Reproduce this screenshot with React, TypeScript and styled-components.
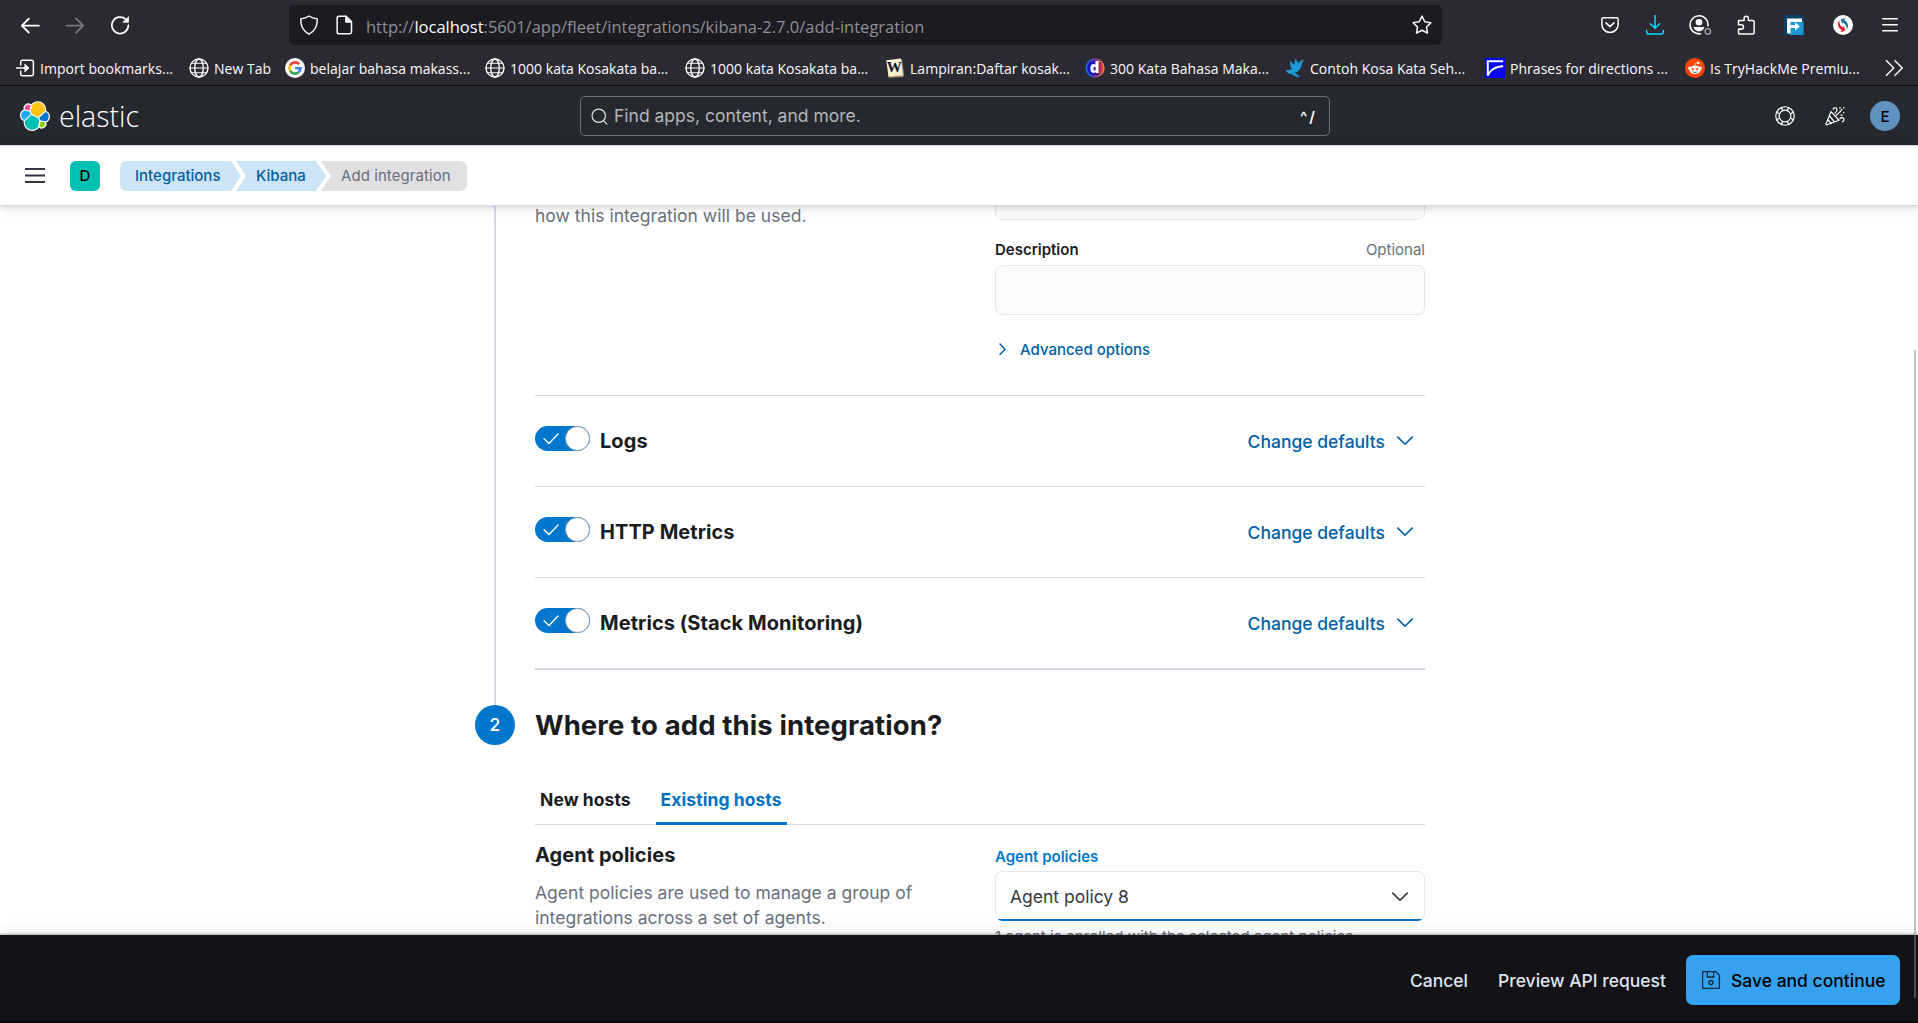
import React from "react";
import styled, { createGlobalStyle } from "styled-components";

const Global = createGlobalStyle`
  * { box-sizing: border-box; }
  html, body { margin: 0; padding: 0; background: #fff; overflow: hidden; }
  svg { display: block; flex: none; }
`;

const ui = `"Inter", "Liberation Sans", sans-serif`;
const chrome = `"Open Sans", "Noto Sans", sans-serif`;

const Page = styled.div`
  position: relative;
  display: flex;
  flex-direction: column;
  width: 1918px;
  height: 1023px;
  font-family: ${ui};
  font-size: 17.5px;
  line-height: 25px;
  color: #343741;
  overflow: hidden;
  white-space: nowrap;
`;

/* Browser chrome */
const Toolbar = styled.div`
  display: flex;
  align-items: center;
  flex: none;
  height: 50px;
  padding: 0 18px 0 20px;
  background: #2b2a33;
  color: #fbfbfe;
`;
const NavButtons = styled.div`
  display: flex;
  gap: 25px;
  width: 269px;
`;
const UrlBar = styled.div`
  display: flex;
  align-items: center;
  width: 1153px;
  height: 40px;
  padding: 0 10px 0 10px;
  border-radius: 5px;
  background: #1c1b22;
`;
const UrlText = styled.div`
  flex: 1;
  margin-left: 12px;
  padding-top: 2px;
  font-family: ${chrome};
  font-size: 16.5px;
  color: #8f8f98;
`;
const Host = styled.span`
  color: #fbfbfe;
`;
const Slot = styled.div<{ $gap: number }>`
  width: 20px;
  height: 20px;
  margin-left: ${(p) => p.$gap}px;
`;
const Bookmarks = styled.div`
  display: flex;
  align-items: center;
  flex: none;
  height: 36px;
  padding: 0 0 0 15px;
  border-bottom: 1px solid #0c0c0d;
  background: #2b2a33;
  color: #fbfbfe;
  font-family: ${chrome};
  font-size: 14px;
`;
const Bookmark = styled.div<{ $width: number }>`
  display: flex;
  align-items: center;
  gap: 5px;
  width: ${(p) => p.$width}px;
`;
const BookmarkLabel = styled.span`
  padding-top: 1px;
  letter-spacing: 0.03px;
`;

/* Kibana header */
const Header = styled.header`
  display: grid;
  grid-template-columns: 1fr 750px 1fr;
  align-items: center;
  flex: none;
  height: 59px;
  padding: 0 18px 0 20px;
  background: #25282f;
  color: #fff;
`;
const Brand = styled.div`
  display: flex;
  align-items: center;
  gap: 9px;
  padding-top: 1px;
`;
const BrandName = styled.span`
  font-family: "Open Sans", sans-serif;
  font-weight: 300;
  font-size: 28.5px;
  line-height: 30px;
  letter-spacing: 0;
`;
const Search = styled.div`
  display: flex;
  align-items: center;
  height: 40px;
  padding: 0 12px 0 10px;
  margin: 1px 0 0 -5px;
  width: 750px;
  border: 1px solid #6b6e75;
  border-radius: 5px;
  color: #b4b6ba;
`;
const SearchText = styled.span`
  flex: 1;
  margin-left: 6px;
  padding-bottom: 1px;
`;
const Shortcut = styled.span`
  font-size: 15px;
  font-weight: 600;
  letter-spacing: 2px;
  color: #fff;
`;
const HeaderActions = styled.div`
  display: flex;
  align-items: center;
  justify-content: flex-end;
  gap: 30px;
  padding-top: 1px;
`;
const Avatar = styled.div`
  display: flex;
  align-items: center;
  justify-content: center;
  width: 30px;
  height: 30px;
  margin-left: -5px;
  border-radius: 50%;
  background: #6092c0;
  color: #000;
  font-size: 15px;
  font-weight: 500;
`;

const SubHeader = styled.div`
  position: relative;
  z-index: 2;
  display: flex;
  align-items: center;
  flex: none;
  height: 61px;
  padding: 1px 25px 0;
  border-top: 1px solid #d3dae6;
  border-bottom: 1px solid #d3dae6;
  background: #fff;
  box-shadow: 0 1px 5px rgba(0, 0, 0, 0.1), 0 3px 10px rgba(0, 0, 0, 0.1);
`;
const Space = styled.div`
  display: flex;
  align-items: center;
  justify-content: center;
  width: 30px;
  height: 30px;
  margin: 0 20px 0 25px;
  padding-bottom: 1px;
  border-radius: 6px;
  background: #00bfb3;
  color: #000;
  font-size: 15px;
  font-weight: 500;
`;
const Crumbs = styled.nav`
  display: flex;
`;
const Crumb = styled.div<{ $place: "first" | "middle" | "last"; $width: number }>`
  width: ${(p) => p.$width}px;
  height: 30px;
  margin-left: ${(p) => (p.$place === "first" ? 0 : -5)}px;
  padding-left: ${(p) => (p.$place === "first" ? 15 : 20)}px;
  line-height: 30px;
  font-size: 15px;
  letter-spacing: ${(p) => (p.$place === "last" ? 0.07 : 0)}px;
  font-weight: ${(p) => (p.$place === "last" ? 400 : 500)};
  color: ${(p) => (p.$place === "last" ? "#69707d" : "#0061a6")};
  background: ${(p) => (p.$place === "last" ? "#e0e0e3" : "#cce4f5")};
  border-radius: ${(p) =>
    p.$place === "first" ? "7px 0 0 7px" : p.$place === "last" ? "0 7px 7px 0" : "0"};
  clip-path: ${(p) =>
    p.$place === "first"
      ? "polygon(0 0, calc(100% - 10px) 0, 100% 50%, calc(100% - 10px) 100%, 0 100%)"
      : p.$place === "middle"
      ? "polygon(0 0, calc(100% - 10px) 0, 100% 50%, calc(100% - 10px) 100%, 0 100%, 10px 50%)"
      : "polygon(0 0, 100% 0, 100% 100%, 0 100%, 10px 50%)"};
`;

/* Page body */
const Main = styled.main`
  flex: none;
  height: 729px;
  padding-left: 475px;
  overflow: hidden;
  background: #fff;
`;
const Step = styled.section`
  display: grid;
  grid-template-columns: 60px 890px;
`;
const Rail = styled.div`
  width: 2px;
  margin-left: 19px;
  background: #d3dae6;
`;
const StepNumber = styled.div`
  display: flex;
  align-items: center;
  justify-content: center;
  width: 40px;
  height: 40px;
  padding-bottom: 1px;
  border-radius: 50%;
  background: #0077cc;
  color: #fff;
  font-weight: 500;
`;
const Columns = styled.div<{ $height: number }>`
  display: grid;
  grid-template-columns: 460px 430px;
  height: ${(p) => p.$height}px;
`;
const Muted = styled.p<{ $top: number }>`
  margin: ${(p) => p.$top}px 0 0;
  letter-spacing: 0.02px;
  color: #69707d;
`;
const Input = styled.div<{ $top: number }>`
  height: 50px;
  margin-top: ${(p) => p.$top}px;
  border: 1px solid #e2e5ea;
  border-radius: 7px;
  background: #fafbfd;
`;
const LabelRow = styled.div`
  display: flex;
  justify-content: space-between;
  margin-top: 17px;
  font-size: 15px;
  color: #69707d;
`;
const Label = styled.span<{ $active?: boolean }>`
  font-size: 15px;
  font-weight: 600;
  color: ${(p) => (p.$active ? "#0077cc" : "#1a1c21")};
`;
const Advanced = styled.div`
  display: flex;
  align-items: center;
  gap: 10px;
  margin: 22px 0 0;
  font-size: 15px;
  font-weight: 500;
  color: #0061a6;
`;
const StreamRow = styled.div`
  display: flex;
  align-items: center;
  height: 91px;
  padding-right: 11px;
  border-top: 1px solid #d3dae6;
`;
const Switch = styled.div`
  display: flex;
  align-items: center;
  justify-content: space-between;
  width: 55px;
  height: 25px;
  margin: 0 10px 5px 0;
  padding-left: 8px;
  border-radius: 13px;
  background: #0077cc;
`;
const Thumb = styled.div`
  width: 25px;
  height: 25px;
  border: 1px solid #98a2b3;
  border-radius: 50%;
  background: #fff;
`;
const Title = styled.h3`
  margin: 0;
  font-size: 20px;
  font-weight: 700;
  line-height: 25px;
  letter-spacing: 0.06px;
  color: #1a1c21;
`;
const ChangeLink = styled.div`
  display: flex;
  align-items: center;
  gap: 11px;
  margin-left: auto;
  font-weight: 500;
  color: #0061a6;
`;
const Heading = styled.h2`
  margin: 0;
  font-size: 27.5px;
  font-weight: 700;
  line-height: 40px;
  letter-spacing: 0.11px;
  color: #1a1c21;
`;
const Rule = styled.div`
  height: 2px;
  background: #d3dae6;
`;
const Tabs = styled.div`
  display: flex;
  gap: 20px;
  height: 50px;
  margin-top: 30px;
  border-bottom: 1px solid #d3dae6;
`;
const Tab = styled.div<{ $active?: boolean }>`
  height: 50px;
  padding: 0 5px;
  line-height: 50px;
  font-weight: 700;
  letter-spacing: 0.06px;
  color: ${(p) => (p.$active ? "#0071c2" : "#1a1c21")};
  border-bottom: ${(p) => (p.$active ? "3px solid #0077cc" : "0")};
`;
const Select = styled.div`
  display: flex;
  align-items: center;
  justify-content: space-between;
  height: 50px;
  margin-top: 2px;
  padding: 0 15px 0 14px;
  border: 1px solid #e6e8ec;
  border-radius: 7px;
  background: linear-gradient(to top, #0077cc 0 2px, #fff 2px);
  border-bottom: 0;
`;
const Help = styled.div`
  margin-top: 3px;
  font-size: 15px;
  color: #69707d;
  letter-spacing: 0.05px;
`;
const PolicyIntro = styled.div`
  padding-top: 18px;
`;
const PolicyField = styled.div`
  display: flex;
  flex-direction: column;
  padding-top: 19px;
`;

const BottomBar = styled.footer`
  position: relative;
  display: flex;
  align-items: center;
  justify-content: flex-end;
  height: 88px;
  padding: 2px 18px 0 0;
  border-bottom: 1px solid #000;
  background: #131217;
  color: #dfe5ef;
  font-weight: 500;
  box-shadow: 0 -1px 2px rgba(0, 0, 0, 0.3), 0 -6px 14px rgba(0, 0, 0, 0.06);
`;
const FlatButton = styled.span<{ $gap: number }>`
  margin-right: ${(p) => p.$gap}px;
  padding-top: 2px;
`;
const Primary = styled.div`
  display: flex;
  align-items: center;
  gap: 10px;
  width: 214px;
  height: 50px;
  padding-left: 15px;
  border-radius: 7px;
  background: #36a2ef;
  color: #000;
`;
const PrimaryLabel = styled.span`
  padding-top: 2px;
`;
const ScrollThumb = styled.div`
  position: absolute;
  top: 350px;
  right: 2px;
  z-index: 3;
  width: 2px;
  height: 648px;
  background: rgba(130, 134, 144, 0.5);
`;

type StrokeProps = {
  children: React.ReactNode;
  size?: number;
  color?: string;
  width?: number;
};
const Stroke = ({ children, size = 20, color = "#fbfbfe", width = 1.2 }: StrokeProps) => (
  <svg
    width={size}
    height={size}
    viewBox="0 0 16 16"
    fill="none"
    stroke={color}
    strokeWidth={width}
    strokeLinecap="round"
    strokeLinejoin="round"
  >
    {children}
  </svg>
);

const Globe = () => (
  <Stroke width={1.1}>
    <circle cx="8" cy="8" r="7.2" />
    <ellipse cx="8" cy="8" rx="3.4" ry="7.2" />
    <path d="M.8 8h14.4M2 4.2h12M2 11.8h12" strokeWidth="0.9" />
  </Stroke>
);
const ImportIcon = () => (
  <Stroke>
    <path d="M4.500 5.500V3.400c0-1 .6-1.600 1.600-1.600h7c1 0 1.600.6 1.600 1.600v9.200c0 1-.6 1.600-1.600 1.600h-7c-1 0-1.600-.6-1.600-1.600v-2.100M1.200 8h8" />
    <path d="M8 5l3.200 3L8 11z" fill="#fbfbfe" strokeWidth="0.6" />
  </Stroke>
);
const GoogleIcon = () => (
  <svg width="20" height="20" viewBox="0 0 20 20">
    <circle cx="10" cy="10" r="10" fill="#fff" />
    <g fill="none" strokeWidth="2.6">
      <path d="M14.1 6.2A5.6 5.6 0 0 0 5.1 7.3" stroke="#ea4335" />
      <path d="M5.1 7.3a5.6 5.6 0 0 0 0 5.4" stroke="#fbbc05" />
      <path d="M5.1 12.7a5.6 5.6 0 0 0 8.5 1.6" stroke="#34a853" />
      <path d="M13.6 14.3a5.6 5.6 0 0 0 2-4.1H10" stroke="#4285f4" />
    </g>
  </svg>
);
const WikiText = styled.text`
  font: 700 15px "Liberation Serif", serif;
`;
const WikiIcon = () => (
  <svg width="20" height="20" viewBox="0 0 20 20">
    <path d="M2.500 3L17 1.500l2 15.500-1 2-14.500.8z" fill="#a99a70" />
    <path d="M1.200 2.200L16 .6l1.800 16.600-14.200 1.400z" fill="#f6efd0" />
    <WikiText x="9.300" y="13.800" textAnchor="middle" fill="#101238">W</WikiText>
  </svg>
);
const DText = styled.text`
  font: 800 15px "Open Sans", sans-serif;
`;
const DIcon = () => (
  <svg width="20" height="20" viewBox="0 0 20 20">
    <defs>
      <linearGradient id="dRing" x1="0" x2="1">
        <stop offset="0.15" stopColor="#1768d8" />
        <stop offset="0.5" stopColor="#7a3aa8" />
        <stop offset="1" stopColor="#ff7a1a" />
      </linearGradient>
      <linearGradient id="dDisc" x1="0" x2="1">
        <stop offset="0.2" stopColor="#1512b8" />
        <stop offset="0.6" stopColor="#4c1c9c" />
        <stop offset="1" stopColor="#e2382c" />
      </linearGradient>
    </defs>
    <circle cx="10" cy="10" r="9.700" fill="url(#dRing)" />
    <circle cx="10" cy="10" r="7.800" fill="url(#dDisc)" />
    <DText x="9.600" y="15.200" textAnchor="middle" fill="#fff">d</DText>
  </svg>
);
const BirdIcon = () => (
  <svg width="20" height="20" viewBox="1 1.500 17 17" fill="#1c9ad6">
    <path d="M1.500 11.500c2.500.8 4.300.3 5.300-1C5.200 8 5 5.300 5.800 3.600c1 1.700 2 2.900 3.300 3.600C8.900 5 9.200 3.300 10.200 2c.7 1.600 1.300 2.700 2.100 3.700 1.300-1.700 3-2.500 5.200-2.600-1.300 1-2 2.200-2.300 3.800-.6 4-2.600 6.700-6.200 7.200 1.700.9 3.300 1.900 5 3.400-2.800.2-5.300-.6-7.300-2.400C4.300 15.200 2.500 13.900 1.500 11.500z" />
  </svg>
);
const PhraseIcon = () => (
  <svg width="20" height="20" viewBox="0 0 20 20">
    <rect width="20" height="20" fill="#0505f0" />
    <path d="M1.800 3.300H18.200M2.800 3v14" fill="none" stroke="#fff" strokeWidth="2" />
    <path d="M18.200 7.300C10.500 7.600 5 10 2 18h1.600C6 12.500 11 9.600 18.200 9.300z" fill="#fff" />
  </svg>
);
const RedditIcon = () => (
  <svg width="20" height="20" viewBox="0 0 20 20">
    <circle cx="10" cy="10" r="10" fill="#ff4500" />
    <g fill="#fff">
      <ellipse cx="10" cy="11.800" rx="5.700" ry="4.300" />
      <circle cx="4.600" cy="10" r="1.500" />
      <circle cx="15.400" cy="10" r="1.500" />
      <circle cx="13.400" cy="5" r="1.200" />
    </g>
    <path d="M10 7.500c0-2 .8-3 2.800-2.700" fill="none" stroke="#fff" strokeWidth="0.8" />
    <circle cx="7.800" cy="11.200" r="1.100" fill="#ff4500" />
    <circle cx="12.200" cy="11.200" r="1.100" fill="#ff4500" />
    <path d="M7.800 13.800c1.300.9 3.100.9 4.400 0" fill="none" stroke="#333" strokeWidth="0.8" />
  </svg>
);

const logoShapes: [string, string][] = [
  ["#fec514", "M12.58 13.787l7.002 3.211 7.066-6.213a7.849 7.849 0 00.152-1.557c0-4.287-3.464-7.77-7.723-7.77a7.71 7.71 0 00-6.384 3.394l-1.174 6.116 1.061 2.819z"],
  ["#00bfb3", "M5.333 21.228A7.964 7.964 0 005.18 22.82c0 4.3 3.475 7.797 7.756 7.797a7.74 7.74 0 006.403-3.421l1.166-6.102-1.556-2.985-7.03-3.215-6.586 6.334z"],
  ["#f04e98", "M5.288 9.077l4.798 1.138L11.14 4.74a3.786 3.786 0 00-5.852 4.34z"],
  ["#1ba9f5", "M4.872 10.215A5.366 5.366 0 001.29 15.24a5.305 5.305 0 003.392 4.95l6.733-6.092-1.236-2.65-5.307-1.233z"],
  ["#93c90e", "M20.873 27.194a3.758 3.758 0 005.878-4.317l-4.798-1.123-1.08 5.44z"],
  ["#0077cc", "M21.848 20.563l5.285 1.236A5.367 5.367 0 0030.716 16.8a5.3 5.3 0 00-3.4-4.945l-6.91 6.053 1.442 2.655z"],
];
const ElasticLogo = () => (
  <svg width="30" height="30" viewBox="0 0 32 32">
    <g fill="#fff" stroke="#fff" strokeWidth="2.6" strokeLinejoin="round">
      {logoShapes.map(([c, d]) => (
        <path key={c} d={d} />
      ))}
    </g>
    {logoShapes.map(([c, d]) => (
      <path key={c} d={d} fill={c} />
    ))}
  </svg>
);

const ChevronDown = ({ color }: { color: string }) => (
  <svg width="18" height="18" viewBox="0 0 18 18" fill="none" stroke={color} strokeWidth="1.7" strokeLinecap="round" strokeLinejoin="round">
    <path d="M1.800 5.200l6.500 6.300q.7.600 1.400 0l6.500-6.300" />
  </svg>
);

const bookmarks: { label: string; width: number; icon: React.ReactNode }[] = [
  { label: "Import bookmarks...", width: 174, icon: <ImportIcon /> },
  { label: "New Tab", width: 96, icon: <Globe /> },
  { label: "belajar bahasa makass...", width: 200, icon: <GoogleIcon /> },
  { label: "1000 kata Kosakata ba...", width: 200, icon: <Globe /> },
  { label: "1000 kata Kosakata ba...", width: 200, icon: <Globe /> },
  { label: "Lampiran:Daftar kosak...", width: 200, icon: <WikiIcon /> },
  { label: "300 Kata Bahasa Maka...", width: 200, icon: <DIcon /> },
  { label: "Contoh Kosa Kata Seh...", width: 200, icon: <BirdIcon /> },
  { label: "Phrases for directions ...", width: 200, icon: <PhraseIcon /> },
  { label: "Is TryHackMe Premiu...", width: 199, icon: <RedditIcon /> },
];

const streams = ["Logs", "HTTP Metrics", "Metrics (Stack Monitoring)"];

export default function App() {
  return (
    <Page>
      <Global />
      <Toolbar>
        <NavButtons>
          <Stroke width={1.5}>
            <path d="M15 8.500H1.500M7 3L1.500 8.500 7 14" />
          </Stroke>
          <Stroke width={1.500} color="#77767e">
            <path d="M1 8.500h13.500M9 3l5.500 5.500L9 14" />
          </Stroke>
          <Stroke width={1.400}>
            <path d="M14.700 8.200A6.600 6.600 0 1 1 12.500 3.300" />
            <path d="M14.800 1.600v4.200h-4.200z" fill="#fbfbfe" strokeWidth="0.600" />
          </Stroke>
        </NavButtons>
        <UrlBar>
          <Stroke>
            <path d="M8 .8c2 1.400 4 2 6.600 2.300C14.800 9 12.600 13 8 15.300 3.400 13 1.200 9 1.400 3.100 4 2.800 6 2.200 8 .8z" />
          </Stroke>
          <Slot $gap={15}>
            <Stroke>
              <path d="M4 1h5.500L14 5.500V13.500a1.500 1.500 0 0 1-1.500 1.500h-8.500A1.500 1.500 0 0 1 2.500 13.500v-11A1.500 1.500 0 0 1 4 1z" />
              <path d="M9.500 1v4.500H14z" fill="#fbfbfe" />
            </Stroke>
          </Slot>
          <UrlText>
            http://<Host>localhost</Host>:5601/app/fleet/integrations/kibana-2.7.0/add-integration
          </UrlText>
          <Stroke>
            <path d="M8 .9l2.200 4.500 4.900.7-3.500 3.500.8 4.900L8 12.200l-4.400 2.300.8-4.900L.9 6.100l4.900-.7z" />
          </Stroke>
        </UrlBar>
        <Slot $gap={158}>
          <Stroke>
            <path d="M2.500 2.200h11c.6 0 1 .4 1 1v4.300a6.500 6.500 0 0 1-13 0V3.200c0-.6.400-1 1-1z" />
            <path d="M4.800 6.300L8 9.300l3.200-3" />
          </Stroke>
        </Slot>
        <Slot $gap={25}>
          <Stroke color="#00ddff">
            <path d="M8 .3v10M4.300 7L8 10.600 11.700 7M1.300 12.300v1c0 1.200.7 1.900 1.900 1.900h9.600c1.200 0 1.900-.7 1.900-1.900v-1" />
          </Stroke>
        </Slot>
        <Slot $gap={24}>
          <svg width="24" height="20" viewBox="0 0 24 20" fill="none">
            <path d="M11.500 18.700A9 9 0 1 1 19 11" stroke="#fbfbfe" strokeWidth="1.600" strokeLinecap="round" />
            <circle cx="10" cy="7.300" r="3.300" fill="#fbfbfe" />
            <path d="M4.600 12h10.800c-.8 2.900-2.600 4.400-5.400 4.400S5.400 14.900 4.600 12z" fill="#fbfbfe" />
            <circle cx="18.800" cy="16.400" r="2.700" stroke="#a5a5aa" strokeWidth="1.300" fill="#2b2a33" />
          </svg>
        </Slot>
        <Slot $gap={27}>
          <Stroke>
            <path d="M2 5V4.300h4.500V2.600a1.700 1.700 0 0 1 3.400 0v1.700h3.600c.6 0 1 .4 1 1v8.900c0 .6-.4 1-1 1H3c-.6 0-1-.4-1-1v-2.900h2.200a1.800 1.800 0 0 0 0-3.600H2V5" />
          </Stroke>
        </Slot>
        <Slot $gap={28}>
          <svg width="20" height="20" viewBox="0 0 20 20">
            <rect width="20" height="20" fill="#0a3f66" />
            <path d="M6 6.500h13.500V20H6z" fill="#1e96d4" />
            <path d="M3 18.500V3.500h15V7H6.500v3H11V7.200l5 4.200-5 4.200V13H6.500v5.500z" fill="#fff" />
          </svg>
        </Slot>
        <Slot $gap={29}>
          <svg width="20" height="20" viewBox="0 0 20 20" fill="none">
            <circle cx="10" cy="10" r="10" fill="#fff" />
            <path d="M8.800 15C5 13 3.800 9 6.300 5.200 6.300 9 7.500 11.200 10 12.500l.9-1.700 1.300 5-5 1.500z" fill="#e3202b" />
            <path d="M11.200 5c3.800 2 5 6 2.500 9.800 0-3.800-1.200-6-3.700-7.300l-.9 1.700-1.300-5 5-1.500z" fill="#1b75a8" />
          </svg>
        </Slot>
        <Slot $gap={27}>
          <Stroke>
            <path d="M2.200 2.900h11.600M2.200 7.700h11.600M2.200 12.500h11.600" />
          </Stroke>
        </Slot>
      </Toolbar>
      <Bookmarks>
        {bookmarks.map((b, i) => (
          <Bookmark key={i} $width={b.width}>
            {b.icon}
            <BookmarkLabel>{b.label}</BookmarkLabel>
          </Bookmark>
        ))}
        <Stroke>
          <path d="M2 2.200L7.800 8 2 13.800M8.800 2.200L14.600 8l-5.800 5.800" />
        </Stroke>
      </Bookmarks>

      <Header>
        <Brand>
          <ElasticLogo />
          <BrandName>elastic</BrandName>
        </Brand>
        <Search>
          <Stroke size={17} color="#dfe0e2" width={1.100}>
            <circle cx="7.300" cy="7.300" r="6.300" />
            <path d="M11.800 11.800L15 15.200" />
          </Stroke>
          <SearchText>Find apps, content, and more.</SearchText>
          <Shortcut>^/</Shortcut>
        </Search>
        <HeaderActions>
          <Stroke color="#fff" width={0.950}>
            <circle cx="8" cy="8" r="7.400" />
            <circle cx="8" cy="8" r="4.700" />
            <path d="M5 1.300l1.200 2.200M11 1.300L9.800 3.500M5 14.700l1.200-2.200M11 14.700l-1.200-2.200M1.300 5l2.200 1.200M1.300 11l2.200-1.200M14.700 5l-2.200 1.200M14.700 11l-2.200-1.200" />
          </Stroke>
          <Stroke color="#fff" width={1}>
            <path d="M4.800 4.500L.8 14.300c-.1.500.2.800.7.700l9.700-3.600zM3.600 8l4 4.700M2.300 11l2.700 3M6.500 2.500c.8-1.600 2.800-1.400 3.100.2.200 1.200-.5 2-1.600 3M12 10c1.200-1.200 3-.8 3.200.6.100 1-.5 1.700-1.300 2M9 7.500l3.500-3.300M12 1v.6M15 1.200v.4M13 3.200l.4-.4M15 5v.3M12.800 7.300h.8" />
          </Stroke>
          <Avatar>E</Avatar>
        </HeaderActions>
      </Header>

      <SubHeader>
        <svg width="20" height="20" viewBox="0 0 20 20" stroke="#343741" strokeWidth="2">
          <path d="M0 3h20M0 9.500h20M0 16h20" />
        </svg>
        <Space>D</Space>
        <Crumbs>
          <Crumb $place="first" $width={121}>Integrations</Crumb>
          <Crumb $place="middle" $width={90}>Kibana</Crumb>
          <Crumb $place="last" $width={146}>Add integration</Crumb>
        </Crumbs>
      </SubHeader>

      <Main>
        <Step>
          <Rail />
          <div>
            <Columns $height={189}>
              <Muted $top={-3}>how this integration will be used.</Muted>
              <div>
                <Input $top={-36} />
                <LabelRow>
                  <Label>Description</Label>
                  <span>Optional</span>
                </LabelRow>
                <Input $top={3} />
                <Advanced>
                  <svg width="15" height="15" viewBox="0 0 15 15" fill="none" stroke="#0061a6" strokeWidth="1.500" strokeLinecap="round" strokeLinejoin="round">
                    <path d="M5 2l5 5.200-5 5.200" />
                  </svg>
                  Advanced options
                </Advanced>
              </div>
            </Columns>
            {streams.map((name) => (
              <StreamRow key={name}>
                <Switch>
                  <svg width="16" height="12" viewBox="0 0 16 12" fill="none" stroke="#fff" strokeWidth="1.300" strokeLinecap="round">
                    <path d="M1 5.800l5 4.700L15 1" />
                  </svg>
                  <Thumb />
                </Switch>
                <Title>{name}</Title>
                <ChangeLink>
                  Change defaults
                  <ChevronDown color="#0061a6" />
                </ChangeLink>
              </StreamRow>
            ))}
            <Rule />
            <Columns $height={35} />
          </div>
        </Step>
        <Step>
          <StepNumber>2</StepNumber>
          <div>
            <Heading>Where to add this integration?</Heading>
            <Tabs>
              <Tab>New hosts</Tab>
              <Tab $active>Existing hosts</Tab>
            </Tabs>
            <Columns $height={140}>
              <PolicyIntro>
                <Title>Agent policies</Title>
                <Muted $top={12}>
                  Agent policies are used to manage a group of
                  <br />
                  integrations across a set of agents.
                </Muted>
              </PolicyIntro>
              <PolicyField>
                <Label $active>Agent policies</Label>
                <Select>
                  Agent policy 8
                  <ChevronDown color="#343741" />
                </Select>
                <Help>1 agent is enrolled with the selected agent policies.</Help>
              </PolicyField>
            </Columns>
          </div>
        </Step>
      </Main>

      <BottomBar>
        <FlatButton $gap={30}>Cancel</FlatButton>
        <FlatButton $gap={20}>Preview API request</FlatButton>
        <Primary>
          <svg width="20" height="20" viewBox="0 0 20 20" fill="none" stroke="#0b2a40" strokeWidth="1.300">
            <path d="M1.600 1.600h13.200l3.600 3.600v13.200H1.600z" strokeLinejoin="round" />
            <path d="M6.300 1.600v5.400h6.400V1.600" />
            <circle cx="10" cy="12.500" r="2" />
          </svg>
          <PrimaryLabel>Save and continue</PrimaryLabel>
        </Primary>
      </BottomBar>
      <ScrollThumb />
    </Page>
  );
}
